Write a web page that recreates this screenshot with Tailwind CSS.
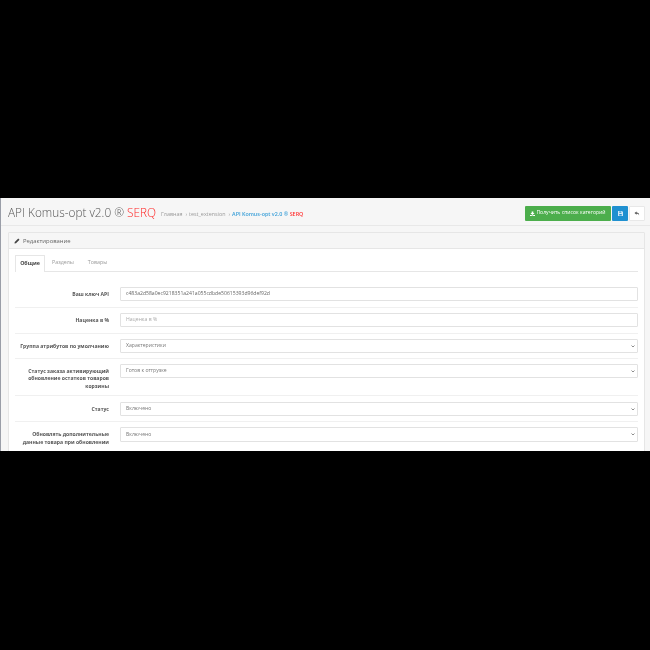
<!DOCTYPE html>
<html><head><meta charset="utf-8"><script src="https://cdn.jsdelivr.net/npm/@tailwindcss/browser@4"></script></head>
<body class="bg-black">
<div class="w-[650px] h-[650px] bg-black pt-[198px] font-['Open_Sans',sans-serif]">
  <div class="h-[253px] overflow-hidden bg-[#f6f6f6] border-l-[1px] border-[#9a9ea8] flex flex-col blur-[0.35px]">
    <div class="h-[28px] shrink-0 border-b border-[#e8e8e8] flex items-center pt-[3px] pl-[7px] pr-[5px]">
      <h1 class="text-[11.800px] font-light text-[#555] leading-none whitespace-nowrap">API Komus-opt v2.0 ® <span class="text-[#f22]">SERQ</span></h1>
      <div class="ml-[5px] mt-[2px] flex items-center gap-[2px] text-[5.400px] text-[#999] whitespace-nowrap">
        <span>Главная</span><span class="ml-[1px]">›</span><span>test_extension</span><span class="ml-[1px]">›</span><span class="font-semibold text-[#3a9fd8]">API Komus-opt v2.0 ® <span class="text-[#f33]">SERQ</span></span>
      </div>
      <div class="ml-auto flex items-center gap-[1px]">
        <div class="h-[15px] w-[86px] bg-[#4cae4c] rounded-[1px] flex items-center justify-center gap-[1px] text-[5.100px] text-white whitespace-nowrap">
          <svg width="5" height="5" viewBox="0 0 12 12" fill="#fff"><path d="M4 1h4v4h3L6 9.500 1 5h3zM0 9.500h3l3 1.500 3-1.500h3V12H0z"/></svg>
          <span>Получить список категорий</span>
        </div>
        <div class="h-[15px] w-[16px] bg-[#1f90d0] rounded-[1px] flex items-center justify-center">
          <svg width="5" height="5" viewBox="0 0 12 12"><path fill="#cfe6f5" d="M0 0h9.500L12 2.500V12H0z"/><path fill="#1f90d0" d="M3 1h5v3H3zM3 7h6v3.500H3z"/></svg>
        </div>
        <div class="h-[15px] w-[16px] bg-white border border-[#e8e8e8] rounded-[1px] flex items-center justify-center">
          <svg width="6" height="5" viewBox="0 0 14 12"><path fill="#555" d="M6 1 1 5l5 4V6.500c3 0 5 .5 6 4 .5-4.500-1.500-7-6-7z"/></svg>
        </div>
      </div>
    </div>
    <div class="ml-[7px] mr-[5px] mt-[6px] bg-white border border-[#e6e6e6] rounded-t-[1px] flex-1">
      <div class="h-[16px] bg-[#f6f6f6] border-b border-[#e6e6e6] flex items-center pt-[1px] pl-[5px] gap-[3px] text-[5.900px] text-[#666]">
        <svg width="6" height="6" viewBox="0 0 12 12" fill="#444"><path d="M8.500 1 11 3.500 4 10.500 1 11l.5-3z"/></svg>
        <span>Редактирование</span>
      </div>
      <div class="px-[6px] pt-[6px]">
        <div class="flex h-[17px] border-b border-[#e6e6e6] text-[5.300px] text-[#999]">
          <div class="w-[30px] h-[17px] bg-white border border-b-0 border-[#e6e6e6] rounded-t-[1px] flex items-center justify-center font-bold text-[#444]">Общие</div>
          <div class="w-[36px] flex items-center justify-center">Разделы</div>
          <div class="w-[33px] flex items-center justify-center">Товары</div>
        </div>
        <div class="mt-[9px] text-[5.100px] text-[#555] leading-[7.500px]">
          <div class="flex items-start h-[27px] border-b border-[#f0f0f0] pt-[6px]">
            <label class="w-[94px] shrink-0 text-right font-bold pt-[4px]">Ваш ключ API</label>
            <div class="ml-[11px] flex-1 h-[14px] border border-[#e2e2e2] rounded-[1px] bg-white flex items-center px-[5px] text-[#666]">c483a2d58a0ec9218351a241a055cdbde50615393d96def92d</div>
          </div>
          <div class="flex items-start h-[26px] border-b border-[#f0f0f0] pt-[5px]">
            <label class="w-[94px] shrink-0 text-right font-bold pt-[4px]">Наценка в %</label>
            <div class="ml-[11px] flex-1 h-[14px] border border-[#e2e2e2] rounded-[1px] bg-white flex items-center px-[5px] text-[#aaa]">Наценка в %</div>
          </div>
          <div class="flex items-start h-[25px] border-b border-[#f0f0f0] pt-[5px]">
            <label class="w-[94px] shrink-0 text-right font-bold pt-[4px]">Группа атрибутов по умолчанию</label>
            <div class="ml-[11px] flex-1 h-[14px] border border-[#e2e2e2] rounded-[1px] bg-white flex items-center justify-between pl-[5px] pr-[2px] text-[#777]">Характеристики<svg width="4" height="3" viewBox="0 0 8 6"><path d="M1 1l3 3 3-3" stroke="#666" stroke-width="1.500" fill="none"/></svg></div>
          </div>
          <div class="flex items-start h-[37px] border-b border-[#f0f0f0] pt-[5px]">
            <label class="w-[94px] shrink-0 text-right font-bold pt-[3.500px]">Статус заказа активирующий обновление остатков товаров корзины</label>
            <div class="ml-[11px] flex-1 h-[14px] border border-[#e2e2e2] rounded-[1px] bg-white flex items-center justify-between pl-[5px] pr-[2px] text-[#777]">Готов к отгрузке<svg width="4" height="3" viewBox="0 0 8 6"><path d="M1 1l3 3 3-3" stroke="#666" stroke-width="1.500" fill="none"/></svg></div>
          </div>
          <div class="flex items-start h-[26px] border-b border-[#f0f0f0] pt-[6px]">
            <label class="w-[94px] shrink-0 text-right font-bold pt-[4px]">Статус</label>
            <div class="ml-[11px] flex-1 h-[14px] border border-[#e2e2e2] rounded-[1px] bg-white flex items-center justify-between pl-[5px] pr-[2px] text-[#777]">Включено<svg width="4" height="3" viewBox="0 0 8 6"><path d="M1 1l3 3 3-3" stroke="#666" stroke-width="1.500" fill="none"/></svg></div>
          </div>
          <div class="flex items-start h-[40px] pt-[5px]">
            <label class="w-[94px] shrink-0 text-right font-bold pt-[4px]">Обновлять дополнительные данные товара при обновлении</label>
            <div class="ml-[11px] flex-1 h-[15px] border border-[#e2e2e2] rounded-[1px] bg-white flex items-center justify-between pl-[5px] pr-[2px] text-[#777]">Включено<svg width="4" height="3" viewBox="0 0 8 6"><path d="M1 1l3 3 3-3" stroke="#666" stroke-width="1.500" fill="none"/></svg></div>
          </div>
        </div>
      </div>
    </div>
  </div>
</div>
</body></html>
